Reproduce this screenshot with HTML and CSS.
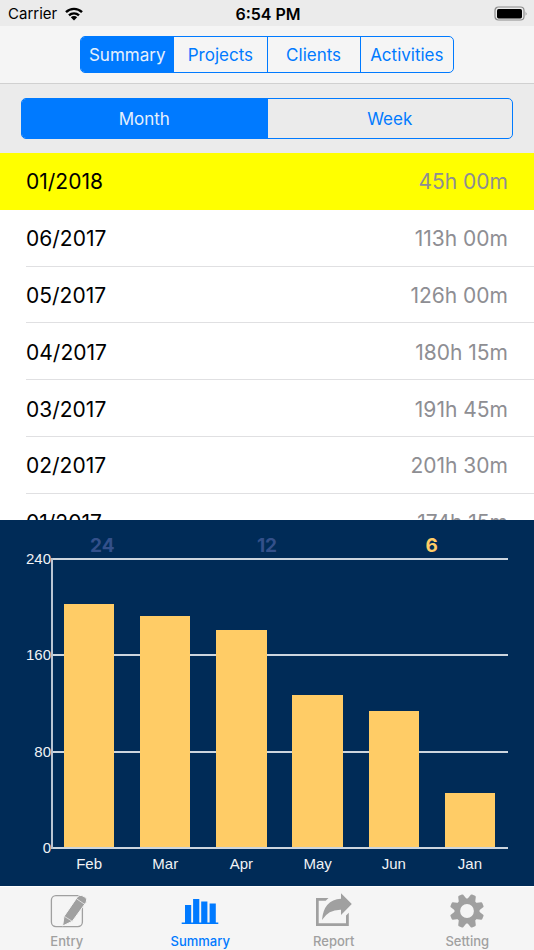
FILE: index.html
```html
<!DOCTYPE html>
<html lang="en">
<head>
    <meta charset="UTF-8">
    <meta name="viewport" content="width=device-width, initial-scale=1.0">
    <title>Summary</title>
    <link rel="stylesheet" href="styles.css">
</head>
<body>
    <div class="app">
        <header class="status-bar">
            <div class="carrier">
                <span>Carrier</span>
                <svg width="20" height="14" viewBox="0 0 20 14" aria-hidden="true">
                    <path d="M2 5.2a11.4 11.4 0 0 1 16 0M5 8.4a7.2 7.2 0 0 1 10 0" fill="none" stroke="#000" stroke-width="2.4"/>
                    <path d="M10 13.4L6.8 10.2a4.6 4.6 0 0 1 6.4 0z"/>
                </svg>
            </div>
            <div class="clock">6:54 PM</div>
            <div class="battery">
                <svg width="34" height="16" viewBox="0 0 34 16" aria-hidden="true">
                    <rect x="1" y="1" width="29" height="13" rx="3.5" fill="none" stroke="#8c8c8c" stroke-width="1.2"/>
                    <rect x="3" y="3" width="25" height="9.4" rx="1.6"/>
                    <path d="M31.6 5.2q1.8 2.3 0 4.6z" fill="#8c8c8c"/>
                </svg>
            </div>
        </header>

        <nav class="nav-bar">
            <div class="segments">
                <button class="segment active">Summary</button>
                <button class="segment">Projects</button>
                <button class="segment">Clients</button>
                <button class="segment">Activities</button>
            </div>
        </nav>

        <div class="range-bar">
            <div class="segments">
                <button class="segment active">Month</button>
                <button class="segment">Week</button>
            </div>
        </div>

        <ul class="months">
            <li class="month current"><span>01/2018</span><span class="hours">45h 00m</span></li>
            <li class="month"><span>06/2017</span><span class="hours">113h 00m</span></li>
            <li class="month"><span>05/2017</span><span class="hours">126h 00m</span></li>
            <li class="month"><span>04/2017</span><span class="hours">180h 15m</span></li>
            <li class="month"><span>03/2017</span><span class="hours">191h 45m</span></li>
            <li class="month"><span>02/2017</span><span class="hours">201h 30m</span></li>
            <li class="month"><span>01/2017</span><span class="hours">174h 15m</span></li>
        </ul>

        <section class="chart">
            <div class="periods">
                <button class="period">24</button>
                <button class="period">12</button>
                <button class="period active">6</button>
            </div>
            <div class="plot">
                <div class="y-axis">
                    <span>240</span>
                    <span>160</span>
                    <span>80</span>
                    <span>0</span>
                </div>
                <div class="lines">
                    <i></i>
                    <i></i>
                    <i></i>
                    <i></i>
                </div>
                <!-- heights are hours / 240 -->
                <div class="bars">
                    <div class="bar" style="height: 84%"></div>
                    <div class="bar" style="height: 79.9%"></div>
                    <div class="bar" style="height: 75.1%"></div>
                    <div class="bar" style="height: 52.5%"></div>
                    <div class="bar" style="height: 47.1%"></div>
                    <div class="bar" style="height: 18.8%"></div>
                </div>
                <div class="x-axis">
                    <span>Feb</span>
                    <span>Mar</span>
                    <span>Apr</span>
                    <span>May</span>
                    <span>Jun</span>
                    <span>Jan</span>
                </div>
            </div>
        </section>

        <nav class="tab-bar">
            <a class="tab" href="#entry">
                <svg width="40" height="36" viewBox="0 0 40 36" aria-hidden="true">
                    <rect x="4.4" y="3.6" width="31" height="31" rx="4.5" fill="none" stroke="currentColor" stroke-width="1.3"/>
                    <path d="M15.6 34L17 24.4 30.8 4.4Q34.5 1.4 39.8 7L39.2 10.2 25.4 29.2z" fill="currentColor" stroke="#f5f5f5" stroke-width="1"/>
                    <path d="M17.4 24.4l7.6 4.8M29.8 7l8 5.4" stroke="#f5f5f5" stroke-width=".7"/>
                </svg>
                <span>Entry</span>
            </a>
            <a class="tab active" href="#summary">
                <svg width="40" height="36" viewBox="0 0 40 36" fill="currentColor" aria-hidden="true">
                    <path d="M5 13h6.2v17.4H5zM13.1 7h6.2v23.4h-6.2zM21.2 9.4h6.2v21h-6.2zM29.6 11.6h6.2v18.8h-6.2zM1.7 30.4h36.6v1.5H1.7z"/>
                </svg>
                <span>Summary</span>
            </a>
            <a class="tab" href="#report">
                <svg width="40" height="36" viewBox="0 0 40 36" fill="currentColor" aria-hidden="true">
                    <path d="M14.5 6H2v28h32.8V20.8l-2.8 2.7v7.7H4.7V8.8h7z"/>
                    <path d="M27 1.2L37.8 12 27 23v-5.2Q14.5 17.5 8 28 9.5 8 27 6.7z"/>
                </svg>
                <span>Report</span>
            </a>
            <a class="tab" href="#setting">
                <svg width="40" height="36" viewBox="0 0 40 36" fill="currentColor" aria-hidden="true">
                    <defs>
                        <path id="tooth" d="M15.6 8.5L17.3 2.6Q17.6 1.8 18.4 1.8h3.2q.8 0 1.1.8L24.4 8.5z"/>
                    </defs>
                    <circle cx="20" cy="19" r="9.7" fill="none" stroke="currentColor" stroke-width="5.6"/>
                    <use href="#tooth" transform="rotate(22.5 20 19)"/>
                    <use href="#tooth" transform="rotate(67.5 20 19)"/>
                    <use href="#tooth" transform="rotate(112.5 20 19)"/>
                    <use href="#tooth" transform="rotate(157.5 20 19)"/>
                    <use href="#tooth" transform="rotate(202.5 20 19)"/>
                    <use href="#tooth" transform="rotate(247.5 20 19)"/>
                    <use href="#tooth" transform="rotate(292.5 20 19)"/>
                    <use href="#tooth" transform="rotate(337.5 20 19)"/>
                </svg>
                <span>Setting</span>
            </a>
        </nav>
    </div>
</body>
</html>
```
FILE: styles.css
```css
* {
    margin: 0;
    padding: 0;
    box-sizing: border-box;
}

body {
    font-family: Inter, "Liberation Sans", sans-serif;
    background: #fff;
    color: #000;
}

button {
    font-family: inherit;
    background: none;
    border: 0;
    cursor: pointer;
}

.app {
    display: flex;
    flex-direction: column;
    height: 100vh;
}

/* Status bar */
.status-bar {
    display: grid;
    grid-template-columns: 1fr auto 1fr;
    align-items: center;
    height: 26px;
    padding: 1px 6px 0 8px;
    background: #ebebeb;
    font-size: 15px;
}

.carrier {
    display: flex;
    align-items: center;
    gap: 7px;
}

.clock {
    font-size: 16px;
    font-weight: 600;
}

.battery {
    display: flex;
    justify-content: flex-end;
}

/* Segmented controls */
.nav-bar {
    display: flex;
    justify-content: center;
    padding: 10px 0;
    background: #f5f5f5;
    border-bottom: 1px solid #d0d0d0;
}

.nav-bar .segments {
    width: 70%;
    height: 37px;
}

.range-bar {
    padding: 14px 21px;
    background: #ebebeb;
}

.range-bar .segments {
    height: 41px;
}

.segments {
    display: flex;
    border: 1px solid #007aff;
    border-radius: 5px;
    overflow: hidden;
}

.segment {
    flex: 1 1 0;
    font-size: 17px;
    color: #007aff;
}

.segment + .segment {
    border-left: 1px solid #007aff;
}

.segment.active {
    background: #007aff;
    color: #e6f0fc;
}

/* Month list */
.months {
    flex: 1 1 0;
    min-height: 0;
    display: grid;
    grid-auto-rows: 15.5%;
    overflow: hidden;
    list-style: none;
}

.month {
    display: flex;
    justify-content: space-between;
    align-items: center;
    margin-left: 26px;
    padding-top: 2px;
    padding-right: 26px;
    border-bottom: 1px solid #e0e0e2;
    font-size: 21px;
}

.month.current {
    margin-left: 0;
    padding-left: 26px;
    background: #ff0;
    border-bottom-color: #ff0;
}

.hours {
    color: #8e8e93;
}

/* Chart */
.chart {
    flex: 1 1 0;
    min-height: 0;
    display: flex;
    flex-direction: column;
    background: #002b57;
}

.periods {
    display: grid;
    grid-template-columns: repeat(3, 1fr);
    margin: 14px 20px 0;
}

.period {
    height: 24px;
    font-size: 19px;
    font-weight: 700;
    color: #33508a;
}

.period.active {
    color: #ffcc66;
}

.plot {
    flex: 1;
    display: grid;
    grid-template-columns: 51px 1fr;
    grid-template-rows: 1fr 37px;
    padding-right: 26px;
    color: #f0f2f5;
    font-family: "Liberation Sans", Arial, sans-serif;
    font-size: 15px;
    line-height: 16px;
}

.y-axis {
    display: flex;
    flex-direction: column;
    justify-content: space-between;
    margin: -7px 0;
    text-align: right;
}

.lines,
.bars {
    grid-column: 2;
    grid-row: 1;
}

.lines {
    display: flex;
    flex-direction: column;
    justify-content: space-between;
    border-left: 2px solid #b9c5d3;
}

.lines i {
    height: 2px;
    background: #ccd5de;
}

.bars {
    display: flex;
    align-items: flex-end;
    justify-content: space-around;
    margin-bottom: 2px;
}

.bar {
    width: 11%;
    background: #ffcc66;
}

.x-axis {
    grid-column: 2;
    display: grid;
    grid-template-columns: repeat(6, 1fr);
    padding-top: 7px;
    text-align: center;
}

/* Tab bar */
.tab-bar {
    display: grid;
    grid-template-columns: repeat(4, 1fr);
    height: 64px;
    padding-top: 5px;
    background: #f5f5f5;
    border-top: 1px solid #fff;
}

.tab {
    display: flex;
    flex-direction: column;
    align-items: center;
    gap: 4px;
    font-size: 13px;
    line-height: 18px;
    font-weight: 500;
    color: #a0a0a0;
    text-decoration: none;
}

.tab.active {
    color: #007aff;
}
```
